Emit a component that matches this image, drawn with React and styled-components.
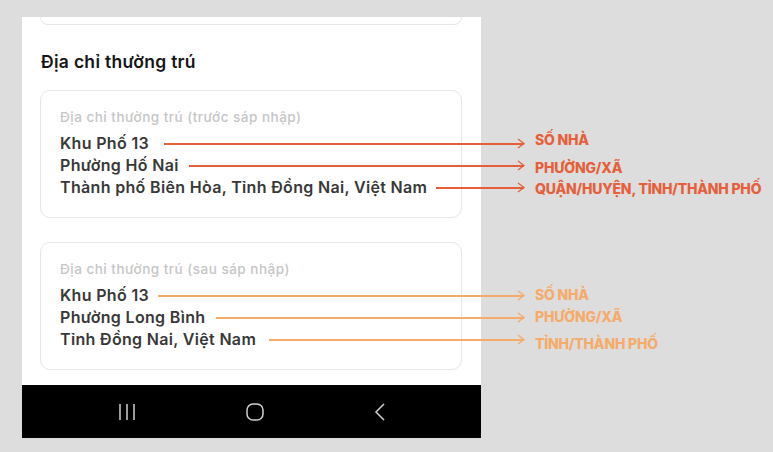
import React from 'react';
import styled, { createGlobalStyle } from 'styled-components';

const GlobalStyle = createGlobalStyle`
  html, body {
    margin: 0;
    padding: 0;
    background: #dddddd;
    font-family: Inter, "Noto Sans", "Liberation Sans", sans-serif;
  }
`;

const Page = styled.div`
  width: 773px;
  height: 452px;
  box-sizing: border-box;
  padding: 17px 0 0 22px;
  overflow: hidden;
`;

const Phone = styled.div`
  width: 459px;
  height: 421px;
  background: #ffffff;
  display: flex;
  flex-direction: column;
`;

const Content = styled.div`
  flex: none;
  padding: 0 19px 0 18px;
  display: flex;
  flex-direction: column;
`;

// bottom edge of the card above, scrolled mostly out of view
const CardStub = styled.div`
  height: 7px;
  border: 1px solid #e8e8e8;
  border-top: none;
  border-radius: 0 0 10px 10px;
`;

const SectionTitle = styled.h2`
  margin: 26px 0 17px 1px;
  font-size: 17.5px;
  line-height: 22px;
  font-weight: 600;
  letter-spacing: 0.3px;
  color: #161616;
`;

const Cards = styled.div`
  display: flex;
  flex-direction: column;
  gap: 24px;
`;

const Card = styled.div`
  box-sizing: border-box;
  height: 128px;
  border: 1px solid #e6e6e6;
  border-radius: 10px;
  padding: 16px 0 0 19px;
`;

const FieldLabel = styled.div`
  font-size: 13.5px;
  line-height: 20px;
  font-weight: 500;
  letter-spacing: 0.5px;
  color: #c6c6c6;
  margin-bottom: 5px;
`;

const Row = styled.div`
  width: 710px;
  height: 22px;
  display: flex;
  align-items: center;
`;

const Value = styled.span`
  flex: none;
  white-space: nowrap;
  font-size: 16px;
  line-height: 22px;
  font-weight: 600;
  letter-spacing: 0.33px;
  color: #383838;
`;

const Leader = styled.div`
  flex: 1;
  display: flex;
  align-items: center;
  margin-left: ${p => p.$gap}px;
  color: ${p => p.$color};
`;

const Line = styled.div`
  flex: 1;
  height: 2px;
  margin-top: 1px;
  background-color: ${p => p.$color};
`;

const Tag = styled.span`
  flex: none;
  width: 245px;
  box-sizing: border-box;
  padding-left: 10px;
  white-space: nowrap;
  font-size: 14px;
  font-weight: 800;
  letter-spacing: -0.2px;
  color: ${p => p.$color};
  transform: translateY(${p => p.$dy || 0}px);
`;

const NavBar = styled.div`
  flex: none;
  margin-top: auto;
  height: 53px;
  background: #000000;
  display: flex;
  align-items: center;
  justify-content: center;
  gap: 110px;
  color: #d0d0d0;
`;

const ArrowHead = () => (
  <svg width="8" height="11" viewBox="0 0 8 11" style={{ marginLeft: -7, marginTop: 1 }}>
    <path d="M1 1 L7 5.5 L1 10" fill="none" stroke="currentColor" strokeWidth="1.3" />
  </svg>
);

const RED = '#e5603a';
const ORANGE = '#f5ab6a';

const before = [
  { text: 'Khu Phố 13', tag: 'SỐ NHÀ', gap: 15, dy: -4 },
  { text: 'Phường Hố Nai', tag: 'PHƯỜNG/XÃ', gap: 10, dy: 2 },
  { text: 'Thành phố Biên Hòa, Tỉnh Đồng Nai, Việt Nam', tag: 'QUẬN/HUYỆN, TỈNH/THÀNH PHỐ', gap: 9, dy: 1 },
];

const after = [
  { text: 'Khu Phố 13', tag: 'SỐ NHÀ', gap: 9, dy: -1 },
  { text: 'Phường Long Bình', tag: 'PHƯỜNG/XÃ', gap: 11, dy: -1 },
  { text: 'Tỉnh Đồng Nai, Việt Nam', tag: 'TỈNH/THÀNH PHỐ', gap: 13, dy: 4 },
];

const AddressCard = ({ label, rows, color }) => (
  <Card>
    <FieldLabel>{label}</FieldLabel>
    {rows.map(r => (
      <Row key={r.text}>
        <Value>{r.text}</Value>
        <Leader $gap={r.gap} $color={color}>
          <Line $color={color} />
          <ArrowHead />
        </Leader>
        <Tag $color={color} $dy={r.dy}>{r.tag}</Tag>
      </Row>
    ))}
  </Card>
);

const MenuIcon = () => (
  <svg width="18" height="18" viewBox="0 0 18 18">
    <path d="M2 1v16M9 1v16M16 1v16" stroke="currentColor" strokeWidth="1.5" />
  </svg>
);

const HomeIcon = () => (
  <svg width="18" height="18" viewBox="0 0 18 18">
    <rect x="1" y="1" width="16" height="16" rx="6" fill="none" stroke="currentColor" strokeWidth="1.5" />
  </svg>
);

const BackIcon = () => (
  <svg width="12" height="18" viewBox="0 0 12 18">
    <path d="M10 1 L2 9 L10 17" fill="none" stroke="currentColor" strokeWidth="1.5" />
  </svg>
);

export default function App() {
  return (
    <>
      <GlobalStyle />
      <Page>
        <Phone>
          <Content>
            <CardStub />
            <SectionTitle>Địa chỉ thường trú</SectionTitle>
            <Cards>
              <AddressCard label="Địa chỉ thường trú (trước sáp nhập)" rows={before} color={RED} />
              <AddressCard label="Địa chỉ thường trú (sau sáp nhập)" rows={after} color={ORANGE} />
            </Cards>
          </Content>
          <NavBar>
            <MenuIcon />
            <HomeIcon />
            <BackIcon />
          </NavBar>
        </Phone>
      </Page>
    </>
  );
}
